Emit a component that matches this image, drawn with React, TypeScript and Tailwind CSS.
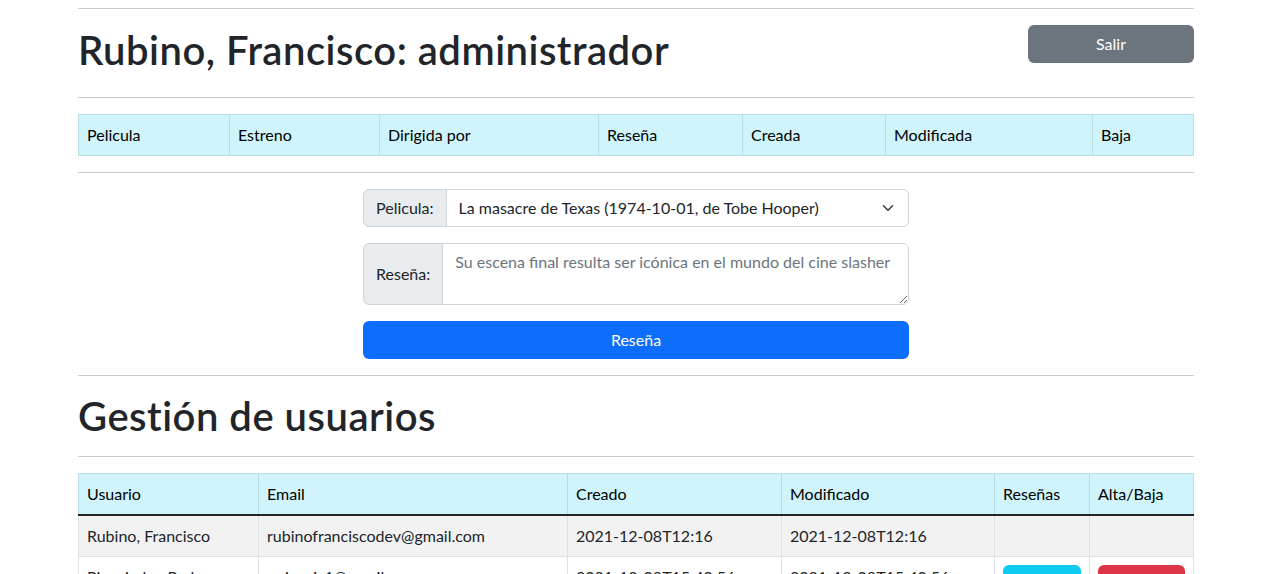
function Hr() {
  return <div className="h-px w-full bg-[#c8c9ca]" />;
}

function Chevron() {
  return (
    <svg width="16" height="12" viewBox="0 0 16 16" fill="none" className="shrink-0">
      <path d="m2 5 6 6 6-6" stroke="#343a40" strokeWidth="2" strokeLinecap="round" strokeLinejoin="round" />
    </svg>
  );
}

const peliculasHeaders = ["Pelicula", "Estreno", "Dirigida por", "Reseña", "Creada", "Modificada", "Baja"];
const usuariosHeaders = ["Usuario", "Email", "Creado", "Modificado", "Reseñas", "Alta/Baja"];

export default function App() {
  return (
    <div className="min-h-screen bg-white font-[Lato,sans-serif] text-base leading-6 text-[#212529]">
      <div className="ml-[78px] w-[1116px] pt-2">
        <Hr />
        <div className="flex h-[88px] items-start justify-between">
          <h1 className="mt-[17px] text-[40px] leading-[48px] font-semibold tracking-[0.5px]">Rubino, Francisco: administrador</h1>
          <button className="mt-4 h-[38px] w-[166px] rounded-md bg-[#6c757d] text-white">Salir</button>
        </div>
        <Hr />

        <div className="my-4 grid grid-cols-[151px_150px_219px_144px_143px_207px_1fr] border border-[#badce3] bg-[#cff4fc] text-black">
          {peliculasHeaders.map((h, i) => (
            <div
              key={h}
              className={
                i < peliculasHeaders.length - 1
                  ? "border-r border-[#badce3] px-2 py-2"
                  : "px-2 py-2"
              }
            >
              {h}
            </div>
          ))}
        </div>
        <Hr />

        <form className="mx-auto my-4 flex w-[546px] flex-col gap-4">
          <div className="flex h-[38px]">
            <span className="flex items-center rounded-l-md border border-[#ced4da] bg-[#e9ecef] px-3">Pelicula:</span>
            <div className="-ml-px flex flex-1 items-center justify-between rounded-r-md border border-[#ced4da] bg-white pl-3 pr-3">
              <span>La masacre de Texas (1974-10-01, de Tobe Hooper)</span>
              <Chevron />
            </div>
          </div>
          <div className="flex h-[62px]">
            <span className="flex items-center rounded-l-md border border-[#ced4da] bg-[#e9ecef] px-3">Reseña:</span>
            <textarea
              rows={2}
              placeholder="Su escena final resulta ser icónica en el mundo del cine slasher"
              className="-ml-px flex-1 rounded-r-md border border-[#ced4da] bg-white px-3 py-1.5 leading-6 placeholder:text-[#6c757d] outline-none"
            />
          </div>
          <button type="button" className="h-[38px] w-full rounded-md bg-[#0d6efd] text-white">Reseña</button>
        </form>
        <Hr />

        <h2 className="mt-4 mb-4 text-[40px] leading-[48px] font-semibold tracking-[0.5px]">Gestión de usuarios</h2>
        <Hr />

        <div className="mt-4">
          <div className="grid grid-cols-[180px_309px_214px_213px_95px_1fr] border-x border-t border-[#badce3] bg-[#cff4fc] text-black">
            {usuariosHeaders.map((h, i) => (
              <div
                key={h}
                className={
                  i < usuariosHeaders.length - 1
                    ? "border-r border-[#badce3] px-2 py-2"
                    : "px-2 py-2"
                }
              >
                {h}
              </div>
            ))}
          </div>
          <div className="h-0.5 bg-[#212529]" />
          <div className="grid grid-cols-[180px_309px_214px_213px_95px_1fr] border-x border-b border-[#dee2e6] bg-[#f2f2f2]">
            <div className="border-r border-[#dee2e6] px-2 py-2">Rubino, Francisco</div>
            <div className="border-r border-[#dee2e6] px-2 py-2">rubinofranciscodev@gmail.com</div>
            <div className="border-r border-[#dee2e6] px-2 py-2">2021-12-08T12:16</div>
            <div className="border-r border-[#dee2e6] px-2 py-2">2021-12-08T12:16</div>
            <div className="border-r border-[#dee2e6] px-2 py-2"></div>
            <div className="px-2 py-2"></div>
          </div>
          <div className="grid grid-cols-[180px_309px_214px_213px_95px_1fr] border-x border-b border-[#dee2e6] bg-white">
            <div className="border-r border-[#dee2e6] px-2 py-2">Picapiedra, Pedro</div>
            <div className="border-r border-[#dee2e6] px-2 py-2">ppicapi_1@gmail.com</div>
            <div className="border-r border-[#dee2e6] px-2 py-2">2021-12-08T15:40:56</div>
            <div className="border-r border-[#dee2e6] px-2 py-2">2021-12-08T15:40:56</div>
            <div className="border-r border-[#dee2e6] px-2 py-2">
              <button className="h-[38px] w-full rounded-md bg-[#0dcaf0] text-black">Ver</button>
            </div>
            <div className="px-2 py-2">
              <button className="h-[38px] w-full rounded-md bg-[#dc3545] text-white">Baja</button>
            </div>
          </div>
        </div>
      </div>
    </div>
  );
}
